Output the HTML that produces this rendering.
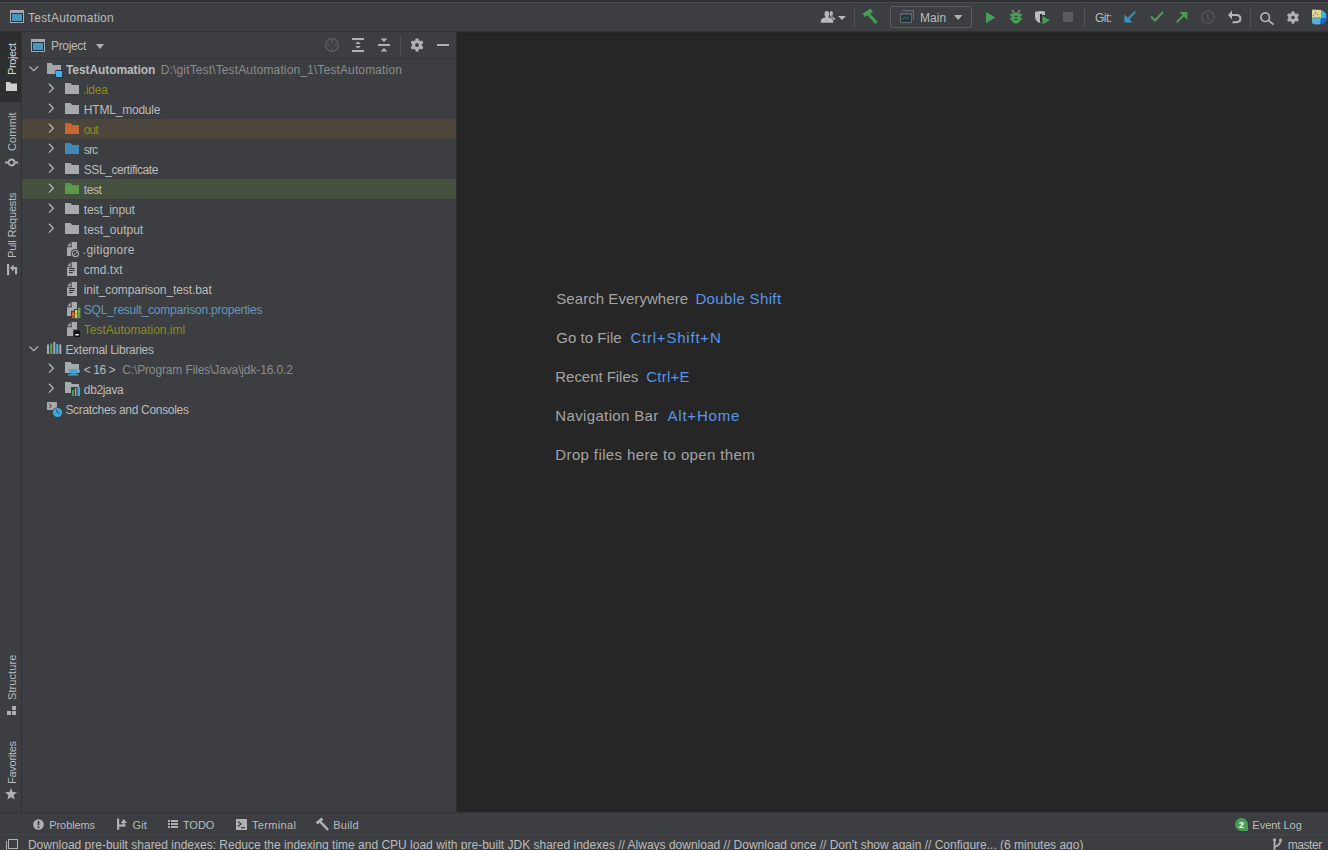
<!DOCTYPE html>
<html><head><meta charset="utf-8">
<style>
*{margin:0;padding:0;box-sizing:border-box}
html,body{width:1328px;height:850px;overflow:hidden;background:#3C3E41;font-family:"Liberation Sans",sans-serif}
.a{position:absolute}
.t{position:absolute;white-space:pre;line-height:1;font-family:"Liberation Sans",sans-serif}
svg{position:absolute;overflow:visible}
</style></head><body>
<!-- title bar -->
<div class="a" style="left:0;top:0;width:1328px;height:2px;background:#2E3033"></div>
<div class="a" style="left:0;top:2px;width:1328px;height:1px;background:#4A4C4F"></div>
<div class="a" style="left:0;top:31px;width:1328px;height:1px;background:#2F3134"></div>
<!-- left strip -->
<div class="a" style="left:0;top:32px;width:21px;height:70px;background:#2C2E30"></div>
<div class="a" style="left:21px;top:32px;width:1px;height:780px;background:#2F3134"></div>
<!-- panel -->
<div class="a" style="left:22px;top:58px;width:434px;height:1px;background:#333537"></div>
<div class="a" style="left:22px;top:119px;width:434px;height:20px;background:#4C463B"></div>
<div class="a" style="left:22px;top:179px;width:434px;height:20px;background:#46503F"></div>
<div class="a" style="left:456px;top:32px;width:1px;height:780px;background:#303133"></div>
<!-- editor -->
<div class="a" style="left:457px;top:32px;width:871px;height:780px;background:#262626"></div>
<div class="a" style="left:457px;top:32px;width:871px;height:4px;background:#232426"></div>
<!-- bottom -->
<div class="a" style="left:0;top:812px;width:1328px;height:1px;background:#323436"></div>
<div class="a" style="left:0;top:834px;width:1328px;height:1px;background:#444649"></div>

<!-- ICONS -->
<!-- title icon -->
<svg style="left:10px;top:10px" width="14" height="13"><rect x="0" y="0" width="14" height="13" fill="#A7AAAD"/><rect x="1" y="3" width="12" height="9" fill="#1E3448"/><rect x="2" y="4" width="10" height="7" fill="#4A98BC"/><path d="M4 6h1v1H4zM7 5h1v1H7zM9 8h1v1H9zM5 9h1v1H5z" fill="#2F7FD0"/></svg>

<!-- toolbar: users -->
<svg style="left:820px;top:10px" width="27" height="13" viewBox="0 0 27 13"><g fill="#B6B8BA"><ellipse cx="11.2" cy="3.4" rx="1.7" ry="2.5"/><path d="M9.5 6.2 Q15 6.5 15 9.5 L15 10 L11 10Z"/></g><g fill="#3C3E41" stroke="#3C3E41" stroke-width="1.1"><ellipse cx="6.9" cy="4.1" rx="2.4" ry="3.2"/><path d="M0.8 12.8 L0.8 11 Q1 8 5 7.4 L9 7.4 Q13 8 13.2 11 L13.2 12.8Z"/></g><g fill="#B6B8BA"><ellipse cx="6.9" cy="4.1" rx="2.4" ry="3.2"/><rect x="5.6" y="6" width="2.6" height="2"/><path d="M0.8 12.8 L0.8 11 Q1 8 5 7.4 L9 7.4 Q13 8 13.2 11 L13.2 12.8Z"/></g><path d="M18 6 L26 6 L22 10Z" fill="#B6B8BA"/></svg>
<div class="a" style="left:854px;top:7px;width:1px;height:20px;background:#515457"></div>
<!-- hammer -->
<svg style="left:862px;top:8px" width="17" height="17" viewBox="0 0 17 17"><path d="M1.8 7.3 L9.8 2.2" stroke="#499C54" stroke-width="4"/><path d="M6 5.5 L14.5 15" stroke="#499C54" stroke-width="3"/></svg>
<!-- combo -->
<div class="a" style="left:890px;top:6px;width:82px;height:22px;border:1px solid #5A5D61;border-radius:3px"></div>
<svg style="left:900px;top:10px" width="15" height="14" viewBox="0 0 15 14"><path d="M2 0.6 L13.5 0.6 L13.5 10" stroke="#64676B" stroke-width="1.2" fill="none"/><rect x="0" y="3" width="12" height="10" fill="#64676B"/><rect x="1" y="4.6" width="10" height="7.4" fill="#253241"/><path d="M2.5 9.5 L4.5 6.8 L6.5 9 L8.5 6.8" stroke="#3A8A48" stroke-width="1" fill="none"/></svg>
<svg style="left:954px;top:15px" width="9" height="5"><path d="M0 0 L8.5 0 L4.25 5Z" fill="#AFB1B3"/></svg>
<!-- run -->
<svg style="left:986px;top:11.5px" width="10" height="12"><path d="M0 0 L9.5 5.6 L0 11.2Z" fill="#499C54"/></svg>
<!-- debug -->
<svg style="left:1009px;top:9px" width="14" height="15" viewBox="0 0 14 15"><path d="M3 1 L5 3.5 M11 1 L9 3.5" stroke="#8FB08F" stroke-width="1.2"/><path d="M3.5 4.5 Q7 2.5 10.5 4.5 L13 5 L13 6.5 L11.5 7 L11.5 8.5 L13 9 L13 10.5 L11.5 11 Q11 14 7 14.7 Q3 14 2.5 11 L1 10.5 L1 9 L2.5 8.5 L2.5 7 L1 6.5 L1 5Z" fill="#499C54"/><path d="M5.3 7.3 L8.8 7.3 M5.3 10.3 L8.8 10.3" stroke="#2C5A33" stroke-width="1.3"/></svg>
<!-- coverage -->
<svg style="left:1034px;top:10px" width="17" height="15" viewBox="0 0 17 15"><path d="M1 2 Q6 0.5 11 1.5 L11 5 L8 5 L8 11 Q7 12.5 6 13 Q1 11 1 7Z" fill="#B9BBBD"/><path d="M6 4 L8 4 L8 11.5 L6 12.5Z" fill="#2A2C2E"/><path d="M8.5 6 L16 10.3 L8.5 14.5Z" fill="#499C54"/></svg>
<!-- stop -->
<div class="a" style="left:1063px;top:12px;width:10px;height:10px;background:#5A5C5E"></div>
<div class="a" style="left:1084px;top:7px;width:1px;height:20px;background:#515457"></div>
<!-- git update arrow -->
<svg style="left:1124px;top:11px" width="12" height="12" viewBox="0 0 12 12"><path d="M11.3 0.7 L2 10" stroke="#3592C4" stroke-width="2"/><path d="M0.5 3.5 L0.5 11.5 L8.5 11.5Z" fill="#3592C4"/></svg>
<!-- check -->
<svg style="left:1150px;top:11px" width="14" height="11" viewBox="0 0 14 11"><path d="M1 5.5 L5 9.5 L13 1" stroke="#499C54" stroke-width="2.2" fill="none"/></svg>
<!-- push arrow -->
<svg style="left:1176px;top:12px" width="12" height="11" viewBox="0 0 12 11"><path d="M0.7 10.3 L9.5 1.5" stroke="#499C54" stroke-width="2"/><path d="M3.5 0 L11.5 0 L11.5 8Z" fill="#499C54"/></svg>
<!-- history clock -->
<svg style="left:1201px;top:10px" width="14" height="14" viewBox="0 0 14 14"><circle cx="7" cy="7" r="6.2" stroke="#54575A" stroke-width="1.3" fill="none"/><path d="M6.5 3.5 L6.5 7.5 L9 9.5" stroke="#54575A" stroke-width="1.3" fill="none"/></svg>
<!-- rollback -->
<svg style="left:1228px;top:10px" width="14" height="14" viewBox="0 0 14 14"><path d="M2.5 5 L8.2 5 Q12.4 5 12.4 8.6 Q12.4 12.2 8.2 12.2 L4.5 12.2" stroke="#B4B6B8" stroke-width="2" fill="none"/><path d="M0 5 L4 0.6 L4 9.4Z" fill="#B4B6B8"/></svg>
<div class="a" style="left:1250px;top:7px;width:1px;height:20px;background:#515457"></div>
<!-- search -->
<svg style="left:1260px;top:12px" width="15" height="13" viewBox="0 0 15 13"><circle cx="5.2" cy="5.2" r="4.3" stroke="#AFB1B3" stroke-width="1.7" fill="none"/><path d="M8.3 8.3 L13.5 12.5" stroke="#AFB1B3" stroke-width="1.9"/></svg>
<!-- gear -->
<svg style="left:1286px;top:11px" width="14" height="13" viewBox="0 0 14 14"><g fill="#AFB1B3"><circle cx="7" cy="7" r="5"/><rect x="5.4" y="0.4" width="3.2" height="13.2" rx="0.9"/><rect x="5.4" y="0.4" width="3.2" height="13.2" rx="0.9" transform="rotate(60 7 7)"/><rect x="5.4" y="0.4" width="3.2" height="13.2" rx="0.9" transform="rotate(120 7 7)"/></g><circle cx="7" cy="7" r="1.9" fill="#3C3E41"/></svg>
<!-- logo -->
<svg style="left:1311px;top:9px" width="17" height="16" viewBox="0 0 17 16"><defs><clipPath id="lg"><path d="M1 1.2 Q1 0.6 2 0.6 L10.5 0.9 Q13 1.5 15.3 5.5 L15.3 11 Q14 14.5 10 15.3 L3.5 15.3 Q1 15 1 12.5Z"/></clipPath></defs><g clip-path="url(#lg)"><rect x="0" y="0" width="17" height="16" fill="#2FAED2"/><rect x="0" y="8.5" width="9" height="8" fill="#5AAFD3"/><path d="M9 16 L10 10 L12 6 L17 3 L17 16Z" fill="#1F5DC4"/><rect x="1" y="0.5" width="9" height="8" fill="#DCD49C"/><rect x="2.5" y="8" width="1" height="1.5" fill="#4CA060"/><rect x="5" y="8" width="1" height="1.5" fill="#4CA060"/><rect x="7.5" y="8" width="1" height="1.5" fill="#4CA060"/><circle cx="4.5" cy="4" r="0.9" fill="#F07A20"/><rect x="6" y="5" width="1" height="1" fill="#807A30"/><rect x="2" y="6" width="1" height="1" fill="#807A30"/><rect x="10" y="3" width="5" height="6" fill="#30B8D0"/><rect x="11" y="9" width="4" height="5" fill="#2560C8"/></g></svg>

<!-- panel header -->
<svg style="left:31px;top:39px" width="14" height="13"><rect x="0" y="0" width="14" height="13" fill="#A7AAAD"/><rect x="1" y="3" width="12" height="9" fill="#1E3448"/><rect x="2" y="4" width="10" height="7" fill="#4A98BC"/><path d="M6 8h1v1H6zM8 7h1v1H8zM4 5h1v1H4z" fill="#2F7FD0"/></svg>
<svg style="left:96px;top:44px" width="9" height="5"><path d="M0 0 L8 0 L4 5Z" fill="#AFB1B3"/></svg>
<!-- locate -->
<svg style="left:325px;top:38px" width="14" height="14" viewBox="0 0 14 14"><circle cx="7" cy="7" r="6.3" stroke="#5D6063" stroke-width="1.3" fill="none"/><path d="M7 2 L7 5 M7 9 L7 12 M2 7 L5 7 M9 7 L12 7" stroke="#5D6063" stroke-width="1.2"/></svg>
<!-- expand all -->
<svg style="left:352px;top:38px" width="12" height="14" viewBox="0 0 12 14"><rect x="0" y="0" width="12" height="2" fill="#AFB1B3"/><rect x="0" y="12" width="12" height="2" fill="#AFB1B3"/><path d="M3 6 L6 3.5 L9 6Z M3 8 L9 8 L6 10.5Z" fill="#AFB1B3"/></svg>
<!-- collapse all -->
<svg style="left:378px;top:38px" width="12" height="14" viewBox="0 0 12 14"><rect x="0" y="6" width="12" height="2" fill="#AFB1B3"/><path d="M2.5 0.5 L9.5 0.5 L6 4Z M2.5 13.5 L9.5 13.5 L6 10Z" fill="#AFB1B3"/></svg>
<div class="a" style="left:400px;top:36px;width:1px;height:19px;background:#4E5154"></div>
<!-- panel gear -->
<svg style="left:410px;top:38px" width="14" height="14" viewBox="0 0 14 14"><g fill="#AFB1B3"><circle cx="7" cy="7" r="5"/><rect x="5.4" y="0.4" width="3.2" height="13.2" rx="0.9"/><rect x="5.4" y="0.4" width="3.2" height="13.2" rx="0.9" transform="rotate(60 7 7)"/><rect x="5.4" y="0.4" width="3.2" height="13.2" rx="0.9" transform="rotate(120 7 7)"/></g><circle cx="7" cy="7" r="1.9" fill="#3C3E41"/></svg>
<div class="a" style="left:437px;top:44px;width:12px;height:2px;background:#AFB1B3"></div>

<!-- tree icons -->
<svg style="left:29px;top:66px" width="10" height="6"><path d="M0.5 0.5 L4.75 4.75 L9 0.5" stroke="#AFB1B3" stroke-width="1.2" fill="none"/></svg>
<svg style="left:47px;top:63px" width="16" height="15" viewBox="0 0 16 15"><path d="M0 0 L4.5 0 L6 2 L14 2 L14 11 L0 11Z" fill="#A3A6AA"/><rect x="8.5" y="7" width="7" height="8" fill="#1B2F55"/><rect x="9" y="8" width="6" height="6" fill="#45B2E2"/></svg>
<svg style="left:48px;top:83px" width="7" height="11" viewBox="0 0 7 11"><path d="M1 0.8 L5.3 5.2 L1 9.6" stroke="#B4B6B8" stroke-width="1.3" fill="none"/></svg>
<svg style="left:48px;top:103px" width="7" height="11" viewBox="0 0 7 11"><path d="M1 0.8 L5.3 5.2 L1 9.6" stroke="#B4B6B8" stroke-width="1.3" fill="none"/></svg>
<svg style="left:48px;top:123px" width="7" height="11" viewBox="0 0 7 11"><path d="M1 0.8 L5.3 5.2 L1 9.6" stroke="#B4B6B8" stroke-width="1.3" fill="none"/></svg>
<svg style="left:48px;top:143px" width="7" height="11" viewBox="0 0 7 11"><path d="M1 0.8 L5.3 5.2 L1 9.6" stroke="#B4B6B8" stroke-width="1.3" fill="none"/></svg>
<svg style="left:48px;top:163px" width="7" height="11" viewBox="0 0 7 11"><path d="M1 0.8 L5.3 5.2 L1 9.6" stroke="#B4B6B8" stroke-width="1.3" fill="none"/></svg>
<svg style="left:48px;top:183px" width="7" height="11" viewBox="0 0 7 11"><path d="M1 0.8 L5.3 5.2 L1 9.6" stroke="#B4B6B8" stroke-width="1.3" fill="none"/></svg>
<svg style="left:48px;top:203px" width="7" height="11" viewBox="0 0 7 11"><path d="M1 0.8 L5.3 5.2 L1 9.6" stroke="#B4B6B8" stroke-width="1.3" fill="none"/></svg>
<svg style="left:48px;top:223px" width="7" height="11" viewBox="0 0 7 11"><path d="M1 0.8 L5.3 5.2 L1 9.6" stroke="#B4B6B8" stroke-width="1.3" fill="none"/></svg>
<svg style="left:48px;top:363px" width="7" height="11" viewBox="0 0 7 11"><path d="M1 0.8 L5.3 5.2 L1 9.6" stroke="#B4B6B8" stroke-width="1.3" fill="none"/></svg>
<svg style="left:48px;top:383px" width="7" height="11" viewBox="0 0 7 11"><path d="M1 0.8 L5.3 5.2 L1 9.6" stroke="#B4B6B8" stroke-width="1.3" fill="none"/></svg>
<svg style="left:29px;top:346px" width="10" height="6"><path d="M0.5 0.5 L4.75 4.75 L9 0.5" stroke="#AFB1B3" stroke-width="1.2" fill="none"/></svg>
<svg style="left:65px;top:83px" width="14" height="11" viewBox="0 0 14 11"><path d="M0 0 L5.5 0 L7 2 L14 2 L14 11 L0 11Z" fill="#A6A9AD"/></svg>
<svg style="left:65px;top:103px" width="14" height="11" viewBox="0 0 14 11"><path d="M0 0 L5.5 0 L7 2 L14 2 L14 11 L0 11Z" fill="#A6A9AD"/></svg>
<svg style="left:65px;top:123px" width="14" height="11" viewBox="0 0 14 11"><path d="M0 0 L5.5 0 L7 2 L14 2 L14 11 L0 11Z" fill="#CF5E35"/><path d="M0 4 L14 4 M0 6 L14 6 M0 8 L14 8 M0 10 L14 10" stroke="#A58F2C" stroke-width="0.8" opacity="0.6"/></svg>
<svg style="left:65px;top:143px" width="14" height="11" viewBox="0 0 14 11"><path d="M0 0 L5.5 0 L7 2 L14 2 L14 11 L0 11Z" fill="#3F89B8"/></svg>
<svg style="left:65px;top:163px" width="14" height="11" viewBox="0 0 14 11"><path d="M0 0 L5.5 0 L7 2 L14 2 L14 11 L0 11Z" fill="#A6A9AD"/></svg>
<svg style="left:65px;top:183px" width="14" height="11" viewBox="0 0 14 11"><path d="M0 0 L5.5 0 L7 2 L14 2 L14 11 L0 11Z" fill="#4E9A52"/><path d="M0 4 L14 4 M0 6 L14 6 M0 8 L14 8 M0 10 L14 10" stroke="#8A9A3A" stroke-width="0.8" opacity="0.6"/></svg>
<svg style="left:65px;top:203px" width="14" height="11" viewBox="0 0 14 11"><path d="M0 0 L5.5 0 L7 2 L14 2 L14 11 L0 11Z" fill="#A6A9AD"/></svg>
<svg style="left:65px;top:223px" width="14" height="11" viewBox="0 0 14 11"><path d="M0 0 L5.5 0 L7 2 L14 2 L14 11 L0 11Z" fill="#A6A9AD"/></svg>
<svg style="left:67px;top:242px" width="10" height="14" viewBox="0 0 10 14"><path d="M0.2 4.2 L3.7 0.2 L3.7 4.2Z" fill="#A6A9AD"/><path d="M4.7 0 L10 0 L10 14 L0 14 L0 5.2 L4.7 5.2Z" fill="#A6A9AD"/></svg>
<svg style="left:67px;top:262px" width="10" height="14" viewBox="0 0 10 14"><path d="M0.2 4.2 L3.7 0.2 L3.7 4.2Z" fill="#A6A9AD"/><path d="M4.7 0 L10 0 L10 14 L0 14 L0 5.2 L4.7 5.2Z" fill="#A6A9AD"/><path d="M2 6.5 L7.7 6.5 M2 8.5 L7.7 8.5 M2 10.5 L5.8 10.5" stroke="#2E3032" stroke-width="1"/></svg>
<svg style="left:67px;top:282px" width="10" height="14" viewBox="0 0 10 14"><path d="M0.2 4.2 L3.7 0.2 L3.7 4.2Z" fill="#A6A9AD"/><path d="M4.7 0 L10 0 L10 14 L0 14 L0 5.2 L4.7 5.2Z" fill="#A6A9AD"/><path d="M2 6.5 L7.7 6.5 M2 8.5 L7.7 8.5 M2 10.5 L5.8 10.5" stroke="#2E3032" stroke-width="1"/></svg>
<svg style="left:67px;top:302px" width="10" height="14" viewBox="0 0 10 14"><path d="M0.2 4.2 L3.7 0.2 L3.7 4.2Z" fill="#A6A9AD"/><path d="M4.7 0 L10 0 L10 14 L0 14 L0 5.2 L4.7 5.2Z" fill="#A6A9AD"/></svg>
<svg style="left:67px;top:322px" width="10" height="14" viewBox="0 0 10 14"><path d="M0.2 4.2 L3.7 0.2 L3.7 4.2Z" fill="#A6A9AD"/><path d="M4.7 0 L10 0 L10 14 L0 14 L0 5.2 L4.7 5.2Z" fill="#A6A9AD"/></svg>
<svg style="left:71px;top:249px" width="9" height="9" viewBox="0 0 9 9"><circle cx="4.4" cy="4.6" r="4.6" fill="#3C3E41"/><circle cx="4.4" cy="4.6" r="3.1" stroke="#A6A9AD" stroke-width="1.2" fill="#2E3032"/><path d="M2.4 6.6 L6.4 2.6" stroke="#A6A9AD" stroke-width="1.2"/></svg>
<svg style="left:71px;top:306px" width="10" height="13" viewBox="0 0 10 13"><path d="M0 4.8 L3 4.8 L3 3 L6 3 L6 0.6 L10 0.6 L10 13 L0 13Z" fill="#3C3E41"/><rect x="1" y="5.8" width="2.4" height="6.4" fill="#D9552B"/><rect x="4" y="4" width="2.4" height="8.2" fill="#D8C86A"/><rect x="7" y="1.6" width="2.4" height="10.6" fill="#55A04C"/><rect x="1.5" y="8" width="1.2" height="1" fill="#E8C040"/><rect x="4.6" y="7" width="1.2" height="1" fill="#C04A28"/><rect x="7.6" y="5" width="1.2" height="1" fill="#C8B040"/></svg>
<svg style="left:73px;top:329px" width="8" height="9" viewBox="0 0 8 9"><rect x="0" y="0.5" width="8" height="8.5" fill="#3C3E41"/><rect x="1" y="1.5" width="6" height="6.5" fill="#141414"/><rect x="2.3" y="5" width="3.5" height="1.5" fill="#EEEEEE"/></svg>
<svg style="left:46.5px;top:342px" width="15" height="13" viewBox="0 0 15 13"><rect x="0" y="2.5" width="2" height="9.5" fill="#A6A9AD"/><rect x="3" y="1.5" width="2.2" height="10.5" fill="#4B9A57"/><rect x="3.7" y="3" width="0.8" height="8" fill="#9A9A40"/><rect x="6.3" y="0" width="2" height="12" fill="#A6A9AD"/><rect x="9.3" y="2" width="2" height="10" fill="#3FB0E0"/><rect x="12.3" y="2.5" width="2" height="9.5" fill="#A6A9AD"/></svg>
<svg style="left:65px;top:362px" width="16" height="14" viewBox="0 0 16 14"><path d="M0 0 L5.5 0 L7 2 L14 2 L14 11 L0 11Z" fill="#A6A9AD"/><path d="M4 7 L12 7 L12 9.5 Q12 12 8 12 Q4 12 4 9.5Z" fill="#3FA8DB"/><path d="M12 8 L14.5 8 L14.5 10 L12 10" stroke="#3FA8DB" fill="none"/><rect x="3" y="12.2" width="10" height="1.3" fill="#3FA8DB"/></svg>
<svg style="left:65px;top:382px" width="16" height="14" viewBox="0 0 16 14"><path d="M0 0 L5.5 0 L7 2 L14 2 L14 11 L0 11Z" fill="#A6A9AD"/><rect x="6" y="5" width="10" height="9" fill="#3C3E41"/><rect x="7" y="8" width="2" height="6" fill="#4B9A57"/><rect x="10" y="6" width="1.3" height="8" fill="#A6A9AD"/><rect x="12.5" y="5" width="2.5" height="9" fill="#3FA8DB"/></svg>
<svg style="left:47px;top:402px" width="16" height="16" viewBox="0 0 16 16"><rect x="0" y="0" width="10" height="8" fill="#A6A9AD"/><path d="M2 2 L4.5 4 L2 6" stroke="#3C3E41" stroke-width="1" fill="none"/><circle cx="10.5" cy="10.5" r="5.3" fill="#3C3E41"/><circle cx="10.5" cy="10.5" r="4.6" fill="#3FA8DB"/><path d="M9.5 7.5 L10.5 10.5 L12.5 12" stroke="#1D3A52" stroke-width="1" fill="none"/></svg>

<!-- editor nothing -->

<!-- bottom toolbar icons -->
<svg style="left:33px;top:819px" width="11" height="11" viewBox="0 0 11 11"><circle cx="5.5" cy="5.5" r="5.3" fill="#AFB1B3"/><rect x="4.6" y="2" width="1.8" height="4.3" fill="#3C3E41"/><rect x="4.6" y="7.3" width="1.8" height="1.8" fill="#3C3E41"/></svg>
<svg style="left:116px;top:818px" width="12" height="12" viewBox="0 0 12 12"><rect x="1" y="0.5" width="2.2" height="11.3" fill="#AFB1B3"/><rect x="1" y="6.5" width="8.5" height="2.2" fill="#AFB1B3"/><rect x="6.6" y="3.5" width="2" height="4" fill="#AFB1B3"/><path d="M4.8 5 L7.6 1 L11.2 5Z" fill="#AFB1B3"/></svg>
<svg style="left:168px;top:820px" width="10" height="8" viewBox="0 0 10 8"><g fill="#AFB1B3"><rect x="0" y="0" width="2" height="2"/><rect x="0" y="3" width="2" height="2"/><rect x="0" y="6" width="2" height="2"/><rect x="3" y="0" width="7" height="2"/><rect x="3" y="3" width="7" height="2"/><rect x="3" y="6" width="7" height="2"/></g></svg>
<svg style="left:236px;top:819px" width="11" height="11" viewBox="0 0 11 11"><rect x="0" y="0" width="11" height="11" fill="#AFB1B3"/><path d="M2 2.5 L5 5 L2 7.5" stroke="#3C3E41" stroke-width="1.3" fill="none"/><rect x="5" y="8" width="4" height="1.3" fill="#3C3E41"/></svg>
<svg style="left:315px;top:817px" width="15" height="15" viewBox="0 0 15 15"><path d="M1.6 6.4 L7.4 1.6" stroke="#AFB1B3" stroke-width="2.8"/><path d="M4.6 4.2 L13 12.8" stroke="#AFB1B3" stroke-width="2.4"/></svg>
<svg style="left:1235px;top:818px" width="14" height="14" viewBox="0 0 14 14"><path d="M6.5 0 A6.5 6.5 0 1 0 6.5 13 L13 13 L13 6.5 A6.5 6.5 0 0 0 6.5 0Z" fill="#4A9D55"/><text x="6.3" y="10.2" font-size="9.5" font-family="Liberation Sans" font-weight="bold" fill="#FFFFFF" text-anchor="middle">2</text></svg>

<!-- status bar icons -->
<div class="a" style="left:6px;top:841px;width:1px;height:9px;background:#AFB1B3"></div>
<div class="a" style="left:8px;top:839px;width:10px;height:10px;border:1px solid #AFB1B3"></div>
<svg style="left:1272px;top:838px" width="11" height="12" viewBox="0 0 11 12"><g stroke="#AFB1B3" stroke-width="1.8" fill="none"><path d="M2.5 2 V12"/><path d="M8.5 2.5 Q8.5 7 2.5 9"/></g><circle cx="2.5" cy="1.8" r="1.6" fill="#AFB1B3"/><circle cx="8.5" cy="2" r="1.6" fill="#AFB1B3"/></svg>

<!-- strip icons -->
<svg style="left:6px;top:82px" width="11" height="9" viewBox="0 0 11 9"><path d="M0 0 L4 0 L5 1.5 L11 1.5 L11 9 L0 9Z" fill="#CFCFCF"/></svg>
<svg style="left:5px;top:156.7px" width="13" height="11" viewBox="0 0 13 11"><circle cx="6.5" cy="5.5" r="3" stroke="#AFB1B3" stroke-width="1.8" fill="none"/><path d="M0 5.5 L3.5 5.5 M9.5 5.5 L13 5.5" stroke="#AFB1B3" stroke-width="1.8"/></svg>
<svg style="left:7px;top:264px" width="11" height="12" viewBox="0 0 11 12"><rect x="0" y="0" width="2.2" height="11.2" fill="#AFB1B3"/><path d="M3 4 L6.6 0.6 L6.6 7.4Z" fill="#AFB1B3"/><rect x="5.5" y="3" width="4.5" height="2" fill="#AFB1B3"/><rect x="8" y="3" width="2.1" height="7.3" fill="#AFB1B3"/></svg>
<svg style="left:7px;top:706px" width="9" height="9" viewBox="0 0 9 9"><g fill="#AFB1B3"><rect x="0" y="5" width="4" height="4"/><rect x="5" y="5" width="4" height="4"/><rect x="5" y="0" width="4" height="4"/></g></svg>
<svg style="left:5px;top:788px" width="12" height="12" viewBox="0 0 12 12"><path d="M6 0 L7.6 4 L12 4.3 L8.6 7.2 L9.7 11.6 L6 9.2 L2.3 11.6 L3.4 7.2 L0 4.3 L4.4 4Z" fill="#AFB1B3"/></svg>

<div class="t" style="left:28.00px;top:11.84px;font-size:12px;color:#BBBBBB;letter-spacing:0.228px;">TestAutomation</div>
<div class="t" style="left:920.00px;top:11.84px;font-size:12px;color:#BBBBBB;letter-spacing:0.088px;">Main</div>
<div class="t" style="left:1095.00px;top:11.84px;font-size:12px;color:#BBBBBB;letter-spacing:-0.545px;">Git:</div>
<div class="t" style="left:51.00px;top:40.34px;font-size:12px;color:#BBBBBB;letter-spacing:-0.336px;">Project</div>
<div class="t" style="left:66.00px;top:63.84px;font-size:12px;color:#BBBBBB;font-weight:bold;letter-spacing:-0.085px;">TestAutomation</div>
<div class="t" style="left:82.80px;top:83.84px;font-size:12px;color:#8C8B1F;letter-spacing:-0.212px;">.idea</div>
<div class="t" style="left:83.80px;top:103.84px;font-size:12px;color:#BBBBBB;letter-spacing:-0.202px;">HTML_module</div>
<div class="t" style="left:83.80px;top:123.84px;font-size:12px;color:#8C8B1F;letter-spacing:-0.924px;">out</div>
<div class="t" style="left:83.80px;top:143.84px;font-size:12px;color:#BBBBBB;letter-spacing:-0.848px;">src</div>
<div class="t" style="left:83.80px;top:163.84px;font-size:12px;color:#BBBBBB;letter-spacing:-0.438px;">SSL_certificate</div>
<div class="t" style="left:83.80px;top:183.84px;font-size:12px;color:#BBBBBB;letter-spacing:-0.436px;">test</div>
<div class="t" style="left:83.80px;top:203.84px;font-size:12px;color:#BBBBBB;letter-spacing:-0.111px;">test_input</div>
<div class="t" style="left:83.80px;top:223.84px;font-size:12px;color:#BBBBBB;">test_output</div>
<div class="t" style="left:82.80px;top:243.84px;font-size:12px;color:#BBBBBB;letter-spacing:0.245px;">.gitignore</div>
<div class="t" style="left:83.80px;top:263.84px;font-size:12px;color:#BBBBBB;">cmd.txt</div>
<div class="t" style="left:83.80px;top:283.84px;font-size:12px;color:#BBBBBB;letter-spacing:-0.093px;">init_comparison_test.bat</div>
<div class="t" style="left:83.80px;top:303.84px;font-size:12px;color:#6897BB;letter-spacing:-0.220px;">SQL_result_comparison.properties</div>
<div class="t" style="left:83.80px;top:323.84px;font-size:12px;color:#8C8B1F;">TestAutomation.iml</div>
<div class="t" style="left:65.40px;top:343.84px;font-size:12px;color:#BBBBBB;letter-spacing:-0.281px;">External Libraries</div>
<div class="t" style="left:83.80px;top:363.84px;font-size:12px;color:#BBBBBB;letter-spacing:-0.445px;">&lt; 16 &gt;</div>
<div class="t" style="left:83.80px;top:383.84px;font-size:12px;color:#BBBBBB;letter-spacing:-0.344px;">db2java</div>
<div class="t" style="left:65.40px;top:403.84px;font-size:12px;color:#BBBBBB;letter-spacing:-0.313px;">Scratches and Consoles</div>
<div class="t" style="left:160.80px;top:63.84px;font-size:12px;color:#8C8C8C;letter-spacing:0.137px;">D:\gitTest\TestAutomation_1\TestAutomation</div>
<div class="t" style="left:122.20px;top:363.84px;font-size:12px;color:#8C8C8C;letter-spacing:-0.131px;">C:\Program Files\Java\jdk-16.0.2</div>
<div class="t" style="left:556.30px;top:291.30px;font-size:15px;color:#A4A4A4;letter-spacing:0.053px;">Search Everywhere</div>
<div class="t" style="left:695.40px;top:291.30px;font-size:15px;color:#5897EC;letter-spacing:0.359px;">Double Shift</div>
<div class="t" style="left:556.30px;top:330.30px;font-size:15px;color:#A4A4A4;letter-spacing:0.035px;">Go to File</div>
<div class="t" style="left:630.40px;top:330.30px;font-size:15px;color:#5897EC;letter-spacing:0.785px;">Ctrl+Shift+N</div>
<div class="t" style="left:555.30px;top:369.00px;font-size:15px;color:#A4A4A4;letter-spacing:-0.042px;">Recent Files</div>
<div class="t" style="left:646.20px;top:369.00px;font-size:15px;color:#5897EC;letter-spacing:0.243px;">Ctrl+E</div>
<div class="t" style="left:555.30px;top:408.10px;font-size:15px;color:#A4A4A4;letter-spacing:0.355px;">Navigation Bar</div>
<div class="t" style="left:667.50px;top:408.10px;font-size:15px;color:#5897EC;letter-spacing:0.781px;">Alt+Home</div>
<div class="t" style="left:555.30px;top:447.00px;font-size:15px;color:#A4A4A4;letter-spacing:0.379px;">Drop files here to open them</div>
<div class="t" style="left:49.30px;top:819.89px;font-size:11px;color:#BBBBBB;letter-spacing:-0.094px;">Problems</div>
<div class="t" style="left:132.50px;top:819.89px;font-size:11px;color:#BBBBBB;letter-spacing:0.100px;">Git</div>
<div class="t" style="left:182.90px;top:819.89px;font-size:11px;color:#BBBBBB;letter-spacing:-0.040px;">TODO</div>
<div class="t" style="left:252.00px;top:819.89px;font-size:11px;color:#BBBBBB;letter-spacing:0.340px;">Terminal</div>
<div class="t" style="left:333.30px;top:819.89px;font-size:11px;color:#BBBBBB;letter-spacing:0.214px;">Build</div>
<div class="t" style="left:1252.30px;top:819.89px;font-size:11px;color:#BBBBBB;">Event Log</div>
<div class="t" style="left:27.90px;top:839.34px;font-size:12px;color:#BBBBBB;">Download pre-built shared indexes: Reduce the indexing time and CPU load with pre-built JDK shared indexes // Always download // Download once // Don't show again // Configure... (6 minutes ago)</div>
<div class="t" style="left:1287.70px;top:839.34px;font-size:12px;color:#BBBBBB;letter-spacing:-0.436px;">master</div>
<div class="t" style="left:7.19px;top:75.00px;font-size:11px;color:#D8D8D8;letter-spacing:-0.363px;transform:rotate(-90deg);transform-origin:0 0;">Project</div>
<div class="t" style="left:7.19px;top:151.30px;font-size:11px;color:#BBBBBB;letter-spacing:0.154px;transform:rotate(-90deg);transform-origin:0 0;">Commit</div>
<div class="t" style="left:7.19px;top:258.30px;font-size:11px;color:#BBBBBB;letter-spacing:-0.197px;transform:rotate(-90deg);transform-origin:0 0;">Pull Requests</div>
<div class="t" style="left:7.19px;top:699.60px;font-size:11px;color:#BBBBBB;letter-spacing:0.086px;transform:rotate(-90deg);transform-origin:0 0;">Structure</div>
<div class="t" style="left:7.19px;top:783.60px;font-size:11px;color:#BBBBBB;letter-spacing:-0.267px;transform:rotate(-90deg);transform-origin:0 0;">Favorites</div>
</body></html>
